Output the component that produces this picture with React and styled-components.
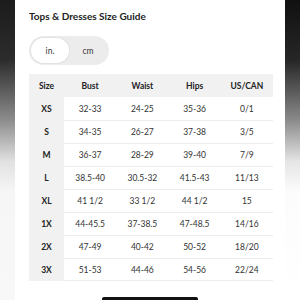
import React from "react";
import styled, { createGlobalStyle } from "styled-components";

const Global = createGlobalStyle`
  html, body {
    margin: 0;
    padding: 0;
    background: #fff;
  }
  body {
    font-family: "Lato", "Liberation Sans", sans-serif;
    color: #2b2b2b;
  }
`;

const Frame = styled.div`
  position: relative;
  display: flex;
  width: 300px;
  height: 300px;
  overflow: hidden;
`;

const Edge = styled.div`
  width: 15px;
  flex: none;
  background: ${(p) =>
    p.right
      ? "linear-gradient(to bottom, #111 0%, #262626 20%, #8a8a8a 40%, #e6e6e6 54%, #fcfcfc 64%, #fff 100%)"
      : "linear-gradient(to bottom, #1c1c1c 0%, #2c2c2c 20%, #8c8c8c 40%, #e2e2e2 54%, #f6f6f6 64%, #f8f8f8 100%)"};
`;

const Sheet = styled.div`
  flex: 1;
  display: flex;
  flex-direction: column;
  padding: 10px 12px 0 14px;
  background: #fff;
`;

const Title = styled.h1`
  margin: 0;
  font-size: 10px;
  line-height: 12px;
  font-weight: 700;
  color: #222;
`;

const Toggle = styled.div`
  display: flex;
  align-items: center;
  width: 80px;
  height: 29px;
  margin-top: 14px;
  padding: 0 2px;
  box-sizing: border-box;
  border-radius: 15px;
  background: #ececec;
`;

const Option = styled.div`
  flex: 1;
  height: 25px;
  display: flex;
  align-items: center;
  justify-content: center;
  border-radius: 13px;
  font-size: 8.5px;
  color: #3a3a3a;
  background: ${(p) => (p.active ? "#fff" : "transparent")};
  box-shadow: ${(p) => (p.active ? "0 0 0 1px #e2e2e2" : "none")};
`;

const Table = styled.div`
  margin-top: 9px;
  display: grid;
  grid-template-columns: 35px repeat(4, 1fr);
  grid-auto-rows: 23px;
`;

const Cell = styled.div`
  display: flex;
  align-items: center;
  justify-content: center;
  font-size: 8.5px;
  font-weight: ${(p) => (p.bold ? 700 : 400)};
  color: ${(p) => (p.bold ? "#222" : "#333")};
  background: ${(p) => (p.shade ? "#f1f1f1" : "#fff")};
  border-top: ${(p) => (p.line ? "1px solid #ececec" : "none")};
  border-bottom: ${(p) => (p.last ? "1px solid #ececec" : "none")};
  box-sizing: border-box;
`;

const HomeBar = styled.div`
  position: absolute;
  left: 102px;
  bottom: 0;
  width: 96px;
  height: 3px;
  border-radius: 2px 2px 0 0;
  background: #111;
`;

const headers = ["Size", "Bust", "Waist", "Hips", "US/CAN"];

const rows = [
  ["XS", "32-33", "24-25", "35-36", "0/1"],
  ["S", "34-35", "26-27", "37-38", "3/5"],
  ["M", "36-37", "28-29", "39-40", "7/9"],
  ["L", "38.5-40", "30.5-32", "41.5-43", "11/13"],
  ["XL", "41 1/2", "33 1/2", "44 1/2", "15"],
  ["1X", "44-45.5", "37-38.5", "47-48.5", "14/16"],
  ["2X", "47-49", "40-42", "50-52", "18/20"],
  ["3X", "51-53", "44-46", "54-56", "22/24"],
];

export default function App() {
  return (
    <>
      <Global />
      <Frame>
        <Edge />
        <Sheet>
          <Title>Tops &amp; Dresses Size Guide</Title>
          <Toggle>
            <Option active>in.</Option>
            <Option>cm</Option>
          </Toggle>
          <Table>
            {headers.map((h) => (
              <Cell key={h} bold shade>
                {h}
              </Cell>
            ))}
            {rows.map((r, i) =>
              r.map((v, j) => (
                <Cell
                  key={i + "-" + j}
                  bold={j === 0}
                  shade={j === 0}
                  line={j > 0 && i > 0}
                  last={j > 0 && i === rows.length - 1}
                >
                  {v}
                </Cell>
              ))
            )}
          </Table>
        </Sheet>
        <Edge right />
        <HomeBar />
      </Frame>
    </>
  );
}
